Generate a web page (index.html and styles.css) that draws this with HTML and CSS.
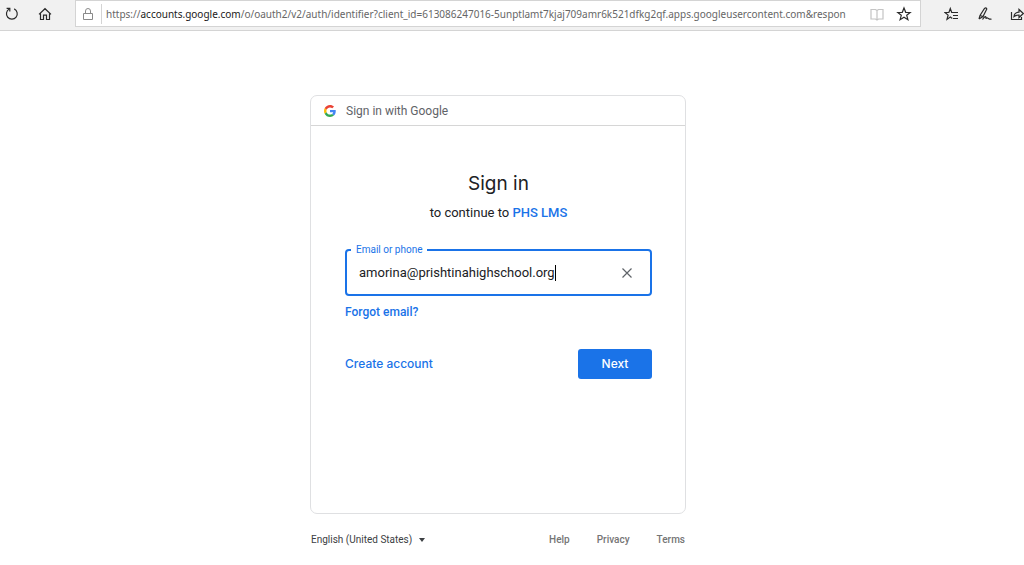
FILE: index.html
```html
<!DOCTYPE html>
<html lang="en">
<head>
<meta charset="utf-8">
<title>Sign in - Google Accounts</title>
<link rel="stylesheet" href="styles.css">
</head>
<body>
<header class="toolbar">
  <button class="tool" aria-label="Refresh"><svg width="16" height="16" viewBox="0 0 16 16"><path d="M10.200 2.900A5.400 5.400 0 1 1 5.300 3"/><path d="M2.600 2.400h3.200v3.200"/></svg></button>
  <button class="tool home" aria-label="Home"><svg width="16" height="16" viewBox="0 0 16 16"><path d="M2 8.400 8 2.700l6 5.700M3.500 7.400v6.100h3V9.200h3v4.300h3V7.400"/></svg></button>
  <div class="address">
    <span class="lock"><svg width="12" height="14" viewBox="0 0 12 14"><path d="M1.500 6.500h9v6h-9zM3.500 6.500V4a2.500 2.500 0 0 1 5 0v2.500"/></svg></span>
    <div class="url" role="textbox" aria-label="Address" contenteditable="true" spellcheck="false">https://<span class="host">accounts.google.com</span>/o/oauth2/v2/auth/identifier?client_id=613086247016-5unptlamt7kjaj709amr6k521dfkg2qf.apps.googleusercontent.com&amp;respon</div>
    <button class="tool reading" aria-label="Reading view"><svg width="14" height="14" viewBox="0 0 14 14"><path d="M1 2.500h4.500L7 3.500l1.500-1H13v9.500H8.500L7 13l-1.500-1H1zM7 3.500V13"/></svg></button>
    <button class="tool" aria-label="Add to favorites"><svg width="16" height="16" viewBox="0 0 16 16"><path d="m8 2 1.700 4.300 4.500.2-3.500 2.800 1.200 4.400L8 11.200l-3.900 2.500 1.200-4.400-3.500-2.800 4.500-.2z"/></svg></button>
  </div>
  <div class="actions">
    <button class="tool" aria-label="Favorites"><svg width="16" height="16" viewBox="0 0 16 16"><path d="M8.500 6.500H7.700L6.300 2.500 4.900 6.500H1l3.100 2.600L3 13.400l3.300-2.300 2 1.400M8.500 6.500H14M9 9.500h5M9 12.500h5"/></svg></button>
    <button class="tool" aria-label="Add notes"><svg width="16" height="16" viewBox="0 0 16 16"><path d="M2 13 3 9.500 7.500 2.500q1.600-1.400 2.300.5L6 10.500 2 13M3 9.500l3 1M5.500 13.500c2.500-4 4-3.500 3.300-.8 1.900-2.500 2.700 1.300 5.700.3"/></svg></button>
    <button class="tool" aria-label="Share"><svg width="16" height="16" viewBox="0 0 16 16"><path d="M1.500 6v7.500h10V11M4 10.500c.3-3 2-4.300 5-4.300V3.500l4.300 4-4.300 4V9C6.500 9 5.300 9.300 4 10.500z"/></svg></button>
  </div>
</header>
<main class="page">
  <div class="column">
    <section class="card">
      <div class="brand">
        <svg width="12" height="12" viewBox="0 0 48 48"><path fill="#ea4335" d="M24 9.500c3.540 0 6.710 1.220 9.210 3.600l6.850-6.850C35.900 2.380 30.470 0 24 0 14.620 0 6.510 5.380 2.560 13.220l7.980 6.190C12.430 13.720 17.740 9.500 24 9.500z"/><path fill="#4285f4" d="M46.980 24.550c0-1.570-.15-3.090-.38-4.550H24v9.020h12.940c-.58 2.960-2.260 5.480-4.780 7.180l7.730 6c4.510-4.180 7.090-10.360 7.090-17.650z"/><path fill="#fbbc05" d="M10.530 28.590A14.500 14.500 0 0 1 9.770 24c0-1.600.27-3.140.76-4.590l-7.980-6.190A24 24 0 0 0 0 24c0 3.880.92 7.540 2.560 10.780z"/><path fill="#34a853" d="M24 48c6.480 0 11.930-2.130 15.890-5.810l-7.730-6C30.010 37.640 27.240 38.490 24 38.490c-6.260 0-11.570-4.220-13.470-9.910l-7.980 6.190C6.510 42.620 14.620 48 24 48z"/></svg>
        <span>Sign in with Google</span>
      </div>
      <form class="form">
        <h1 class="title">Sign in</h1>
        <p class="subtitle">to continue to <a class="link" href="#">PHS LMS</a></p>
        <fieldset class="field">
          <legend class="legend"><label for="email">Email or phone</label></legend>
          <div class="entry">
            <input class="email" id="email" type="text" value="amorina@prishtinahighschool.org" spellcheck="false">
            <span class="caret"></span>
            <button class="clear" type="button" aria-label="Clear"><svg width="12" height="12" viewBox="0 0 12 12"><path d="m1.500 1.500 9 9M10.500 1.500l-9 9"/></svg></button>
          </div>
        </fieldset>
        <a class="link forgot" href="#">Forgot email?</a>
        <div class="buttons">
          <a class="link create" href="#">Create account</a>
          <button class="next" type="button">Next</button>
        </div>
      </form>
    </section>
    <footer class="footer">
      <div class="language">
        <select class="select" aria-label="Language"><option>English (United States)</option></select>
        <span class="arrow"></span>
      </div>
      <nav class="links"><a href="#">Help</a><a href="#">Privacy</a><a href="#">Terms</a></nav>
    </footer>
  </div>
</main>
</body>
</html>
```

FILE: styles.css
```css
* { box-sizing: border-box; }
body {
  margin: 0;
  background: #fff;
  color: #202124;
  font-family: Roboto, "Liberation Sans", sans-serif;
  overflow-x: hidden;
}
button { padding: 0; border: 0; background: none; font: inherit; }
a { color: inherit; text-decoration: none; }
svg { display: block; flex: none; }

.toolbar {
  display: flex;
  align-items: center;
  height: 31px;
  padding: 0 0 3px 4px;
  background: #f1f1f1;
  border-bottom: 1px solid #d4d4d4;
  overflow: hidden;
}
.tool { flex: none; }
.tool svg, .lock svg { fill: none; stroke: #2b2b2b; stroke-width: 1.2; }
.home { margin-left: 17px; }
.address {
  display: flex;
  align-items: center;
  flex: 1;
  min-width: 0;
  height: 27px;
  margin-left: 22px;
  padding-right: 8px;
  background: #fff;
  border: 1px solid #d4d4d4;
}
.lock {
  display: flex;
  align-items: center;
  height: 20px;
  padding: 0 7px 0 6px;
  border-right: 1px solid #d4d4d4;
}
.lock svg { stroke: #8a8a8a; stroke-width: 1; }
.url {
  flex: 1;
  min-width: 0;
  padding-left: 4px;
  overflow: hidden;
  white-space: nowrap;
  color: #666;
  font: 10px/18px "Noto Sans", "Open Sans", sans-serif;
}
.host { color: #1a1a1a; }
.reading { margin: 0 12px 0 8px; }
.reading svg { stroke: #c4c4c4; }
.actions { display: flex; gap: 17px; margin: 0 -2px 0 23px; }

.page {
  display: flex;
  justify-content: center;
  padding: 64px 28px 16px 0;
}
.column { width: 376px; }
.card {
  min-height: 419px;
  border: 1px solid #dfe0e2;
  border-radius: 7px;
}
.brand {
  display: flex;
  align-items: center;
  gap: 10px;
  height: 30px;
  padding: 1px 0 0 13px;
  border-bottom: 1px solid #d6d6d6;
  color: #5f6368;
  font-size: 12px;
}
.form { padding: 43px 33px 42px 34px; }
.title {
  margin: 0;
  font: 400 19px/30px Inter, sans-serif;
  text-align: center;
}
.subtitle {
  margin: 4px 0 0;
  font-size: 13px;
  line-height: 20px;
  text-align: center;
}
.link { color: #1a73e8; font-weight: 500; }
.field {
  min-width: 0;
  height: 52px;
  margin: 21px 0 0;
  padding: 0;
  border: 2px solid #1a73e8;
  border-radius: 4px;
}
.legend {
  margin-left: 4px;
  padding: 0 5px;
  color: #1a73e8;
  font-size: 10px;
  line-height: 12px;
}
.entry { display: flex; align-items: center; height: 34px; padding: 0 17px 0 12px; }
.email {
  field-sizing: content;
  padding: 0;
  border: 0;
  outline: 0;
  background: none;
  color: #202124;
  font: 13px/20px Roboto, sans-serif;
}
.caret { width: 1px; height: 16px; background: #000; }
.clear { margin-left: auto; }
.clear svg { fill: none; stroke: #5f6368; stroke-width: 1.2; }
.forgot { display: block; margin-top: 8px; font-size: 12px; line-height: 16px; }
.buttons {
  display: flex;
  align-items: center;
  justify-content: space-between;
  margin-top: 29px;
}
.create { font: 500 12px/16px Inter, sans-serif; }
.next {
  width: 74px;
  height: 30px;
  border-radius: 3px;
  background: #1a73e8;
  color: #fff;
  font: 500 12px/16px Inter, sans-serif;
}
.footer {
  display: flex;
  align-items: center;
  justify-content: space-between;
  margin-top: 18px;
  font-size: 10px;
  line-height: 16px;
}
.language { display: flex; align-items: center; gap: 6px; padding-left: 1px; }
.select {
  appearance: none;
  padding: 0;
  border: 0;
  background: none;
  color: #3c4043;
  font: inherit;
}
.arrow { border: 3px solid transparent; border-top: 4px solid #3c4043; border-bottom: 0; }
.links { display: flex; gap: 27px; padding-right: 1px; color: #757575; font-weight: 500; }
```
